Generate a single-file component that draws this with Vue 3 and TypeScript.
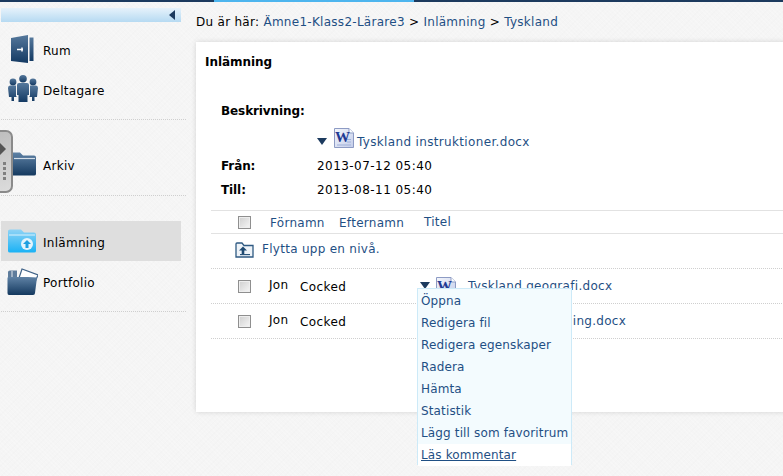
<script setup lang="ts">
const menu: string[] = ['Öppna', 'Redigera fil', 'Redigera egenskaper', 'Radera', 'Hämta', 'Statistik', 'Lägg till som favoritrum', 'Läs kommentar']
const rows = [
  { first: 'Jon', last: 'Cocked', file: 'Tyskland geografi.docx' },
  { first: 'Jon', last: 'Cocked', file: 'Tyskland befolkning.docx' }
]
</script>

<template>
  <div class="page">
    <div class="topbar"><div class="topbar-active"></div></div>
    <div class="columns">
      <aside class="sidebar">
        <div class="side-head"><span class="collapse"></span></div>
        <nav class="group group-first">
          <a class="nav-item">
            <svg class="i-rum" width="24" height="28" viewBox="0 0 24 28">
              <defs><linearGradient id="nv" x1="0" y1="0" x2="0" y2="1"><stop offset="0" stop-color="#55789c"/><stop offset="1" stop-color="#143a63"/></linearGradient></defs>
              <path d="M1 3 L18 0 V28 L1 26 Z" fill="url(#nv)"/>
              <path d="M19.500 2.500 H23.500 V26 H19.500 Z" fill="url(#nv)"/>
              <path d="M7 14.500 H13 M12 12.500 V16.500" stroke="#fff" stroke-width="1.500"/>
            </svg>
            <span class="label">Rum</span>
          </a>
          <a class="nav-item">
            <svg class="i-people" width="30" height="27" viewBox="0 0 30 27">
              <g fill="url(#nv)">
                <circle cx="5" cy="7" r="3.400"/><path d="M0 13 Q0 10.500 2 10.500 H8 L8.500 22 H6 V26 H3.500 V22 H1 Z"/>
                <circle cx="25" cy="7" r="3.400"/><path d="M30 13 Q30 10.500 28 10.500 H22 L21.500 22 H24 V26 H26.500 V22 H29 Z"/>
                <circle cx="15" cy="3.800" r="3.800"/><path d="M9 10 Q9 8 11 8 H19 Q21 8 21 10 V20 H19.500 V27 H10.500 V20 H9 Z"/>
              </g>
              <path d="M8.500 11 V21 M21.500 11 V21" stroke="#f5f5f5" stroke-width="1"/>
            </svg>
            <span class="label">Deltagare</span>
          </a>
        </nav>
        <nav class="group group-second">
          <a class="nav-item">
            <svg class="i-folder" width="28" height="24" viewBox="0 0 28 24">
              <defs><linearGradient id="fo" x1="0" y1="0" x2="0" y2="1"><stop offset="0" stop-color="#5f82a5"/><stop offset="1" stop-color="#14395f"/></linearGradient></defs>
              <path d="M0 2 Q0 0.500 2 0.500 H12 L15 3.500 H26 Q28 3.500 28 5.500 V22 Q28 23.500 26 23.500 H2 Q0 23.500 0 22 Z" fill="url(#fo)"/>
              <path d="M6 6.500 H27" stroke="#d4dee8" stroke-width="1.200"/>
            </svg>
            <span class="label">Arkiv</span>
          </a>
        </nav>
        <nav class="group group-third">
          <a class="nav-item active">
            <svg class="i-folder" width="28" height="24" viewBox="0 0 28 24">
              <defs><linearGradient id="bl" x1="0" y1="0" x2="0" y2="1"><stop offset="0" stop-color="#8fd3f5"/><stop offset="1" stop-color="#1ab2f5"/></linearGradient></defs>
              <path d="M0 2 Q0 0.500 2 0.500 H13 L16 3.500 H26 Q28 3.500 28 5.500 V22 Q28 23.500 26 23.500 H2 Q0 23.500 0 22 Z" fill="url(#bl)"/>
              <path d="M1 6 H27" stroke="#d9f1fc" stroke-width="1"/>
              <circle cx="19" cy="15" r="6" fill="#e4f4fc"/>
              <path d="M19 11 L23 15 H20.500 V19 H17.500 V15 H15 Z" fill="#1e9fe0"/>
            </svg>
            <span class="label">Inlämning</span>
          </a>
          <a class="nav-item">
            <svg class="i-port" width="31" height="27" viewBox="0 0 31 27">
              <path d="M12 10 L15 1 L31 7 L28 14" fill="#fff" stroke="#3f6287" stroke-width="1.200"/>
              <path d="M1 4 Q1 2.500 3 2.500 H10 V12 H1 Z" fill="#5e7c9c"/>
              <path d="M5 3 V10" stroke="#e4e9ef" stroke-width="1"/>
              <path d="M8 9 H21 L30 9.500 L28 25 Q28 27 26 27 H2 Q0.500 27 0.500 25 V10 Q0.500 9 2 9 Z" fill="url(#fo)"/>
            </svg>
            <span class="label">Portfolio</span>
          </a>
        </nav>
      </aside>

      <main class="main">
        <div class="crumbs">
          <span>Du är här: </span>
          <a>Ämne1-Klass2-Lärare3</a>
          <span> &gt; </span>
          <a>Inlämning</a>
          <span> &gt; </span>
          <a>Tyskland</a>
        </div>
        <section class="card">
          <h1 class="card-title">Inlämning</h1>
          <div class="meta">
            <div class="meta-desc"><b>Beskrivning:</b></div>
            <div class="meta-file">
              <span class="caret"></span>
              <svg class="word" width="20" height="20" viewBox="0 0 20 20">
                <defs><linearGradient id="wd" x1="0" y1="0" x2="1" y2="1"><stop offset="0" stop-color="#f4f6fb"/><stop offset="1" stop-color="#c3cdea"/></linearGradient></defs>
                <path d="M0.500 0.500 H15 L19.500 5 V19.500 H0.500 Z" fill="url(#wd)" stroke="#8d9bc4"/>
                <path d="M15 0.500 V5 H19.500" fill="#fff" stroke="#8d9bc4"/>
                <path d="M13 11.500 H17 M13 14 H17 M3 17 H17" stroke="#9fb0d8"/>
                <text x="1" y="13.500" class="wt">W</text>
              </svg>
              <a>Tyskland instruktioner.docx</a>
            </div>
            <div class="meta-row"><b>Från:</b><span>2013-07-12 05:40</span></div>
            <div class="meta-row"><b>Till:</b><span>2013-08-11 05:40</span></div>
          </div>

          <div class="table">
            <div class="thead">
              <span class="check"></span>
              <a class="th-first">Förnamn</a>
              <a class="th-last">Efternamn</a>
              <a class="th-title">Titel</a>
            </div>
            <div class="up-row">
              <svg width="19" height="16" viewBox="0 0 19 16">
                <path d="M1 2 Q1 1 2 1 H7 L9 3.500 H18 V15 H1 Z" fill="#eef3f8" stroke="#2f5a82" stroke-width="1.300"/>
                <path d="M8 4.500 L12 8.500 H9.300 V12 H6.700 V8.500 H4 Z" fill="#1f4a72"/>
                <path d="M5 12.600 H15" stroke="#1f4a72" stroke-width="1.100"/>
              </svg>
              <a>Flytta upp en nivå.</a>
            </div>
            <div v-for="(r, i) in rows" :key="i" class="row">
              <span class="check"></span>
              <span class="td-first">{{ r.first }}</span>
              <span class="td-last">{{ r.last }}</span>
              <span class="caret row-caret"></span>
              <svg class="word" width="20" height="20" viewBox="0 0 20 20">
                <path d="M0.500 0.500 H15 L19.500 5 V19.500 H0.500 Z" fill="url(#wd)" stroke="#8d9bc4"/>
                <path d="M15 0.500 V5 H19.500" fill="#fff" stroke="#8d9bc4"/>
                <text x="1" y="13.500" class="wt">W</text>
              </svg>
              <a class="td-file">{{ r.file }}</a>
            </div>
          </div>

          <ul class="menu">
            <li v-for="(m, i) in menu" :key="m" :class="{ hover: i === menu.length - 1 }">{{ m }}</li>
          </ul>
        </section>
      </main>
    </div>
    <div class="handle">
      <span class="handle-arrow"></span>
      <span class="handle-dots"><i></i><i></i><i></i><i></i></span>
    </div>
  </div>
</template>

<style>
html, body { margin: 0; background: #f5f5f5; overflow: hidden; }
</style>

<style scoped>
.page {
  position: relative;
  width: 783px;
  height: 476px;
  overflow: hidden;
  background-color: #f5f5f5;
  background-image:
    repeating-linear-gradient(45deg, rgba(255,255,255,.18) 0 1px, transparent 1px 3px),
    repeating-linear-gradient(-45deg, rgba(0,0,0,.008) 0 1px, transparent 1px 4px);
  font-family: "DejaVu Sans", Verdana, sans-serif;
  font-size: 12px;
  letter-spacing: .28px;
  color: #000;
}
a { color: #1f4f84; }
b { letter-spacing: -.1px; }
.topbar { height: 2px; background: #1c3a5e; padding-left: 214px; }
.topbar-active { width: 200px; height: 2px; background: #4db5ee; }
.columns { display: flex; height: 474px; }
.sidebar { width: 186px; flex: none; padding: 6px 0 0 1px; box-sizing: border-box; }
.side-head {
  width: 180px; height: 14px;
  background: linear-gradient(#e6f2fb, #b6daf2);
  display: flex; justify-content: flex-end; align-items: center;
  padding-right: 3px; box-sizing: border-box;
}
.collapse { width: 0; height: 0; border-style: solid; border-width: 5px 6px 5px 0; border-color: transparent #1c3a5e transparent transparent; margin-right: 3px; }
.group { width: 185px; border-bottom: 1px dotted #cfcfcf; box-sizing: border-box; }
.group-first { height: 98px; padding-top: 7px; }
.group-second { height: 76px; padding-top: 24px; }
.group-third { height: 116px; padding-top: 25px; }
.nav-item { position: relative; display: flex; align-items: center; width: 180px; height: 40px; color: #000; }
.nav-item svg { position: absolute; top: 50%; }
.label { margin: 4px 0 0 42px; }
.i-rum { left: 9px; margin-top: -14px; }
.i-people { left: 7px; margin-top: -14px; }
.i-folder { left: 7px; margin-top: -12px; }
.i-port { left: 6px; margin-top: -13px; }
.nav-item.active { background: #dedede; }
.main { flex: 1; min-width: 0; padding-left: 10px; }
.crumbs { height: 40px; line-height: 40px; white-space: pre; }
.card {
  position: relative;
  width: 620px; height: 370px;
  background: #fff;
  box-shadow: 0 0 5px rgba(0,0,0,.14);
  box-sizing: border-box;
  padding: 2px 0 0 9px;
}
.card-title { margin: 0; height: 36px; line-height: 36px; font-size: 12px; font-weight: bold; letter-spacing: -.05px; }
.meta { padding: 21px 0 0 16px; }
.meta-desc { height: 20px; line-height: 20px; }
.meta-file { display: flex; align-items: center; height: 33px; padding-left: 96px; }
.meta-file .caret { margin: 7px 7px 0 0; }
.meta-file a { margin-left: 3px; margin-top: 8px; letter-spacing: .34px; }
.meta-row { display: flex; height: 24px; align-items: center; }
.meta-row b { width: 96px; flex: none; }
.meta-row span { letter-spacing: .45px; }
.caret { display: inline-block; width: 0; height: 0; flex: none; border-style: solid; border-width: 7px 5px 0 5px; border-color: #1c3a5e transparent transparent transparent; }
.word { flex: none; }
.wt { font: bold 15px "Liberation Serif", serif; letter-spacing: -1px; fill: #1f3a93; }
.table { margin: 8px 0 0 6px; }
.thead { display: flex; align-items: center; height: 22px; border-top: 1px solid #e2e2e2; border-bottom: 1px solid #e2e2e2; padding-left: 27px; }
.check { display: inline-block; width: 11px; height: 11px; flex: none; border: 1px solid #8f8f8f; background: linear-gradient(135deg, #cfcfcf, #f6f6f6); box-shadow: inset 0 0 0 1px #eee; }
.th-first { margin: 1px 0 0 19px; width: 69px; }
.th-last { margin-top: 1px; width: 85px; }
.th-title { margin-top: -1px; }
.up-row { display: flex; align-items: center; height: 35px; border-bottom: 1px dotted #cfcfcf; padding: 0 0 3px 24px; box-sizing: border-box; }
.up-row a { margin: -2px 0 0 8px; }
.row { display: flex; align-items: center; height: 35px; border-bottom: 1px dotted #cfcfcf; padding-left: 27px; box-sizing: border-box; }
.td-first { margin: -3px 0 0 18px; width: 31px; }
.td-last { margin-top: 2px; width: 120px; letter-spacing: .4px; }
.row-caret { margin-top: -2px; margin-right: 6px; }
.row .word { margin-top: 2px; }
.td-file { margin-left: 12px; letter-spacing: .3px; }
.menu {
  position: absolute;
  left: 221px; top: 246px;
  width: 155px; height: 177px;
  margin: 0; padding: 1px 0 0 0;
  box-sizing: border-box;
  list-style: none;
  background: #f3fbfe;
  border: 1px solid #cdeaf8;
  letter-spacing: .14px;
}
.menu li { height: 22px; line-height: 22px; padding-left: 3px; color: #1f4f84; white-space: nowrap; }
.menu li.hover { background: #fff; text-decoration: underline; }
.handle {
  position: absolute; left: -8px; top: 130px;
  width: 21px; height: 63px;
  box-sizing: border-box;
  border: 2px solid #8a8a8a;
  border-radius: 7px;
  background: linear-gradient(160deg, #bdbdbd, #dcdcdc);
}
.handle-arrow { position: absolute; left: 6px; top: 11px; width: 0; height: 0; border-style: solid; border-width: 6px 0 6px 6px; border-color: transparent transparent transparent #555; }
.handle-dots { position: absolute; left: 9px; top: 30px; display: flex; flex-direction: column; gap: 2px; }
.handle-dots i { display: block; width: 3px; height: 3px; background: #808080; }
</style>
